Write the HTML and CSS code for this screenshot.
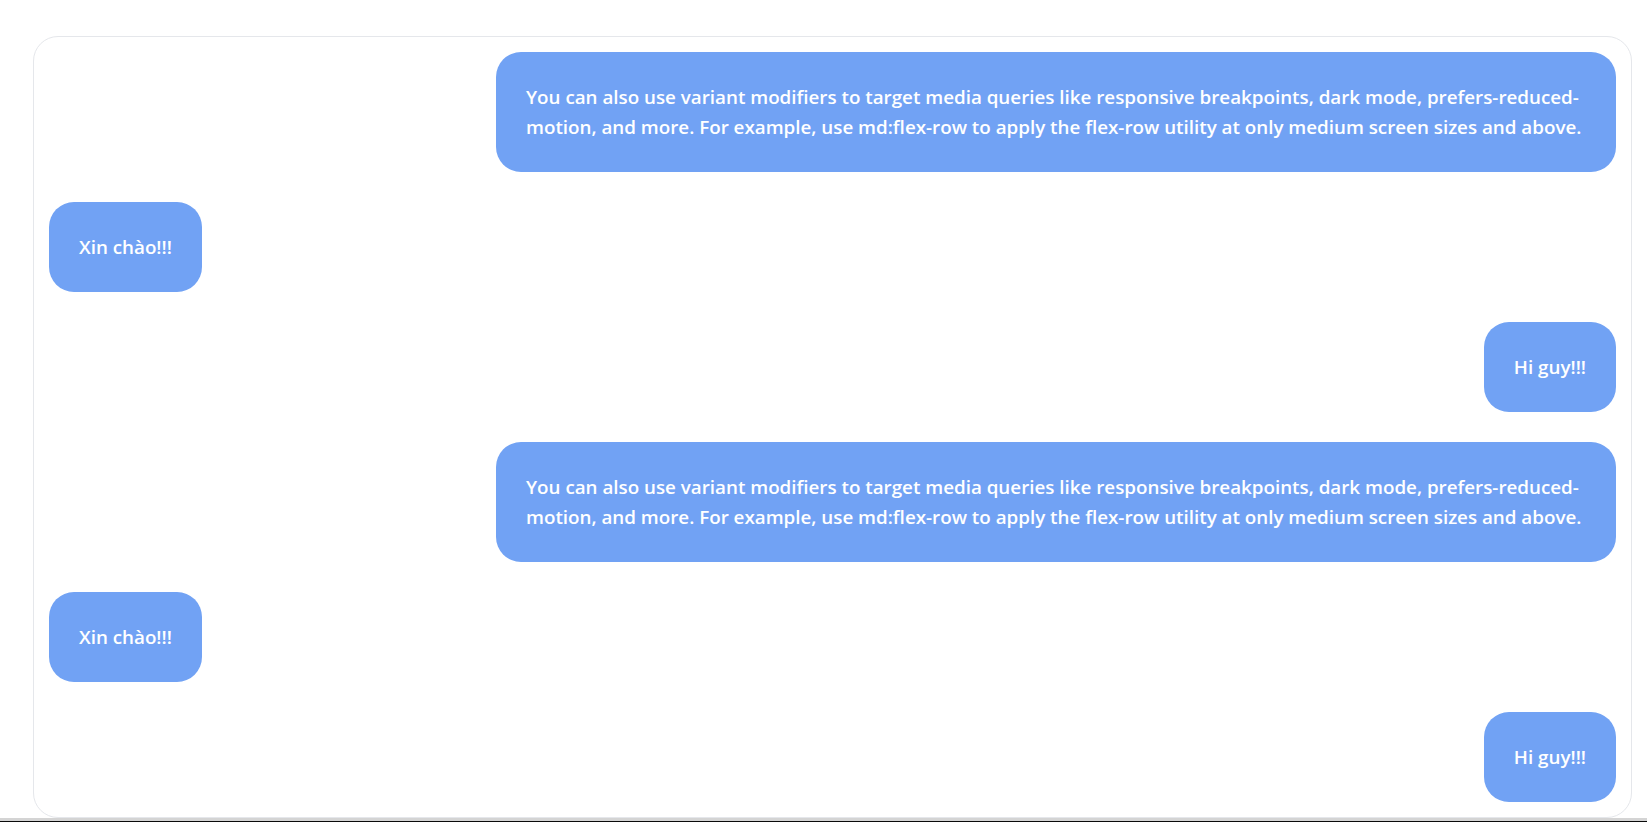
FILE: index.html
```html
<!DOCTYPE html>
<html lang="vi">
<head>
<meta charset="utf-8">
<title>Chat</title>
<link rel="stylesheet" href="styles.css">
</head>
<body>
<main class="page">
  <section class="chat">
    <div class="row row-right"><div class="bubble">You can also use variant modifiers to target media queries like responsive breakpoints, dark mode, prefers-reduced-motion, and more. For example, use md:flex-row to apply the flex-row utility at only medium screen sizes and above.</div></div>
    <div class="row row-left"><div class="bubble">Xin chào!!!</div></div>
    <div class="row row-right"><div class="bubble">Hi guy!!!</div></div>
    <div class="row row-right"><div class="bubble">You can also use variant modifiers to target media queries like responsive breakpoints, dark mode, prefers-reduced-motion, and more. For example, use md:flex-row to apply the flex-row utility at only medium screen sizes and above.</div></div>
    <div class="row row-left"><div class="bubble">Xin chào!!!</div></div>
    <div class="row row-right"><div class="bubble">Hi guy!!!</div></div>
  </section>
</main>
<div class="edge"></div>
</body>
</html>
```
FILE: styles.css
```css
html, body {
  margin: 0;
  padding: 0;
  background: #ffffff;
  height: 100%;
  overflow: hidden;
}
body {
  font-family: "Open Sans", "Noto Sans", "Liberation Sans", sans-serif;
  display: flex;
  flex-direction: column;
}
.page {
  flex: 1;
  padding: 36px 15px 0 33px;
}
.chat {
  border: 1px solid #e5e7eb;
  border-radius: 25px;
  padding: 15px;
  display: flex;
  flex-direction: column;
  gap: 30px;
  box-sizing: border-box;
  width: 1599px;
}
.row {
  display: flex;
}
.row-right {
  justify-content: flex-end;
}
.row-left {
  justify-content: flex-start;
}
.bubble {
  background: #71a2f4;
  color: #ffffff;
  font-size: 18.8px;
  font-weight: 600;
  line-height: 30px;
  padding: 30px;
  border-radius: 25px;
  max-width: 1120px;
  box-sizing: border-box;
}
.edge {
  height: 3px;
  border-top: 3px solid #d4d4d4;
  background: #0a0a0a;
  flex: none;
}
```
